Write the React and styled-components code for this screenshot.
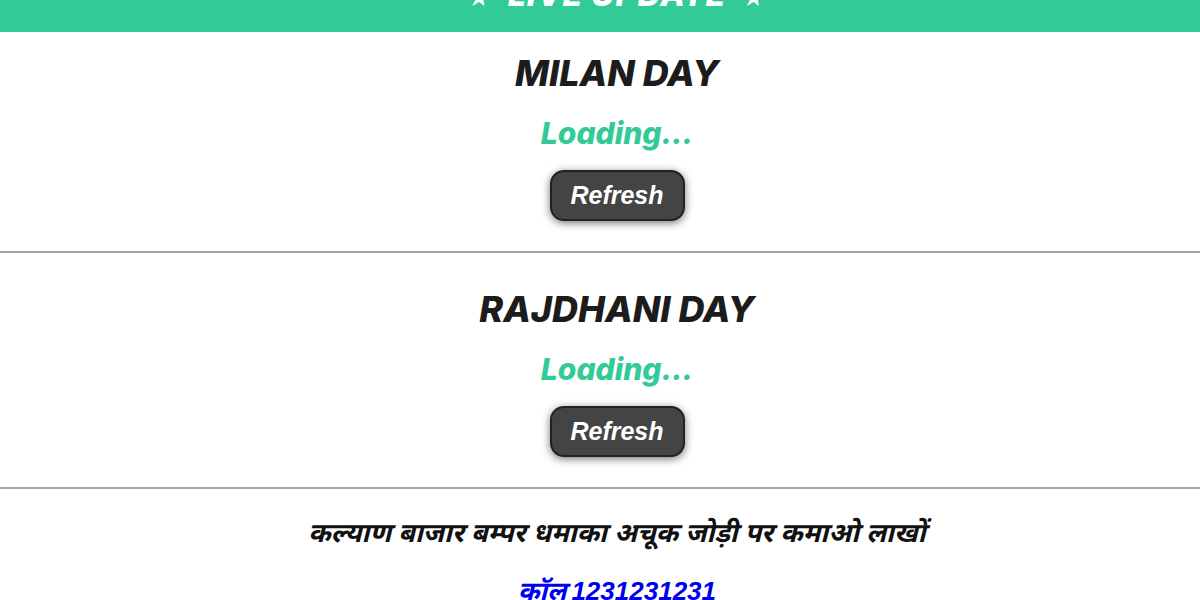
import React from "react";
import styled, { createGlobalStyle } from "styled-components";

const Global = createGlobalStyle`
  html, body { margin: 0; padding: 0; background: #fff; overflow: hidden; }
  body { font-family: "Liberation Sans", Arial, sans-serif; }
`;

const Page = styled.div`
  width: 1234px;
  display: flex;
  flex-direction: column;
  text-align: center;
`;

const Banner = styled.div`
  height: 32px;
  margin-top: -20px;
  padding: 0 0 20px;
  background: #32ca97;
  color: #fff;
  font-family: Inter, "Noto Sans", sans-serif;
  font-style: italic;
  font-weight: 800;
  font-size: 32px;
  line-height: 30px;
  letter-spacing: 1px;
`;

const Star = styled.span`
  margin: 0 16px;
  font-size: 22px;
  line-height: 0;
`;

const Market = styled.section`
  display: flex;
  flex-direction: column;
  align-items: center;
  padding: 34px 0 30px;
  border-bottom: 2px solid #a4a4a4;

  &:first-of-type {
    padding-top: 19px;
  }
`;

const Title = styled.h2`
  margin: 0;
  font-family: Inter, "Noto Sans", sans-serif;
  font-style: italic;
  font-weight: 800;
  font-size: 36px;
  line-height: 44px;
  color: #1c1c1c;
`;

const Status = styled.div`
  margin-top: 20px;
  font-family: Inter, "Noto Sans", sans-serif;
  font-style: italic;
  font-weight: 800;
  font-size: 30px;
  line-height: 36px;
  color: #32ca97;
`;

const RefreshButton = styled.button`
  margin-top: 19px;
  width: 135px;
  height: 51px;
  border: 2px solid #222;
  border-radius: 14px;
  background: #444;
  color: #fff;
  font-family: "Liberation Sans", Arial, sans-serif;
  font-style: italic;
  font-weight: 700;
  font-size: 25px;
  box-shadow: 0 2px 8px rgba(0, 0, 0, 0.55);
  cursor: pointer;
`;

const Promo = styled.div`
  display: flex;
  flex-direction: column;
  align-items: center;
  padding-top: 28px;
`;

const Tagline = styled.p`
  margin: 0;
  font-family: "Noto Sans Devanagari", "Noto Sans", sans-serif;
  font-style: italic;
  font-weight: 700;
  font-size: 27px;
  line-height: 38px;
  color: #111;
`;

const CallLink = styled.a`
  margin-top: 18px;
  font-family: "Liberation Sans", "Noto Sans Devanagari", sans-serif;
  font-style: italic;
  font-weight: 700;
  font-size: 26px;
  line-height: 36px;
  color: #0000f0;
  text-decoration: underline;
`;

const Number = styled.span`
  margin-left: 5px;
`;

const markets = ["MILAN DAY", "RAJDHANI DAY"];

export default function App() {
  return (
    <Page>
      <Global />
      <Banner>
        <Star>★</Star>LIVE UPDATE<Star>★</Star>
      </Banner>
      {markets.map((name) => (
        <Market key={name}>
          <Title>{name}</Title>
          <Status>Loading...</Status>
          <RefreshButton>Refresh</RefreshButton>
        </Market>
      ))}
      <Promo>
        <Tagline>कल्याण बाजार बम्पर धमाका अचूक जोड़ी पर कमाओ लाखों</Tagline>
        <CallLink href="#">
          कॉल<Number>1231231231</Number>
        </CallLink>
      </Promo>
    </Page>
  );
}
